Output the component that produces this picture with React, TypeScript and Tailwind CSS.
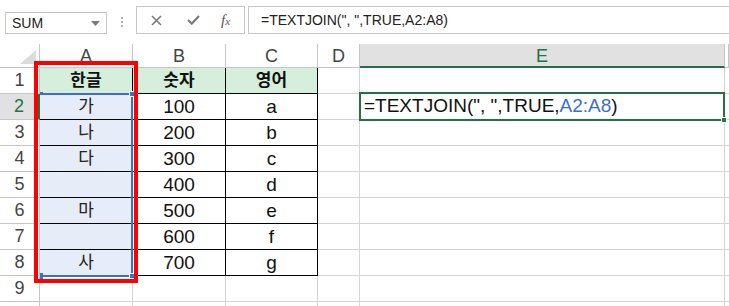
import React from 'react';

const rows: [string, string, string][] = [
  ['한글', '숫자', '영어'],
  ['가', '100', 'a'],
  ['나', '200', 'b'],
  ['다', '300', 'c'],
  ['', '400', 'd'],
  ['마', '500', 'e'],
  ['', '600', 'f'],
  ['사', '700', 'g'],
  ['', '', ''],
  ['', '', ''],
];

const cols = ['A', 'B', 'C', 'D', 'E', ''];

const Toolbar = () => (
  <div className="relative h-[44px] flex items-start bg-white">
    {/* Name box */}
    <div className="ml-[5px] mt-[12px] w-[102px] h-[22px] border border-[#c6c6c6] flex items-center justify-between pl-[6px] pr-[6px]">
      <span className="text-[14px] text-[#222]">SUM</span>
      <svg width="9" height="5" viewBox="0 0 9 5">
        <path d="M0 0 L9 0 L4.5 5 Z" fill="#7a7a7a" />
      </svg>
    </div>
    {/* Dots */}
    <div className="ml-[14px] mt-[17px] flex flex-col gap-[2px]">
      <div className="w-[2px] h-[2px] bg-[#b5b5b5]" />
      <div className="w-[2px] h-[2px] bg-[#b5b5b5]" />
      <div className="w-[2px] h-[2px] bg-[#b5b5b5]" />
    </div>
    {/* Function buttons */}
    <div className="ml-[13px] mt-[6px] w-[109px] h-[28px] border border-[#c6c6c6] flex items-center">
      <svg className="ml-[14px]" width="11" height="11" viewBox="0 0 11 11">
        <path d="M1 1 L10 10 M10 1 L1 10" stroke="#7a7a7a" strokeWidth="1.6" />
      </svg>
      <svg className="ml-[25px]" width="13" height="10" viewBox="0 0 13 10">
        <path d="M1 5 L4.8 8.6 L12 1" stroke="#7a7a7a" strokeWidth="2.2" fill="none" />
      </svg>
      <span className="ml-[21px] text-[15px] italic text-[#555] leading-none" style={{ fontFamily: '"Liberation Serif", serif' }}>
        f<span className="text-[11px]">x</span>
      </span>
    </div>
    {/* Formula bar */}
    <div className="ml-[3px] mt-[6px] flex-1 h-[28px] border border-r-0 border-[#c6c6c6] flex items-center pl-[12px]">
      <span className="text-[14px] text-[#222] whitespace-pre">=TEXTJOIN(", ",TRUE,A2:A8)</span>
    </div>
  </div>
);

export default function App() {
  return (
    <div className="w-[729px] h-[306px] overflow-hidden bg-white relative" style={{ fontFamily: '"Liberation Sans", "Noto Sans CJK KR", Arial, sans-serif' }}>
      <Toolbar />
      <div className="grid grid-cols-[40px_93px_93px_92px_42px_365px_1fr] grid-rows-[24px_repeat(10,26px)]">
        {/* Header row */}
        <div className="relative border-r border-b border-[#c6c6c6] bg-white">
          <svg className="absolute left-0 top-0" width="40" height="24" viewBox="0 0 40 24">
            <path d="M36 6 L36 20 L20 20 Z" fill="#dcdcdc" />
          </svg>
        </div>
        {cols.map((c, i) =>
          c === 'E' ? (
            <div key={i} className="bg-[#e1e1e1] border-r border-[#c6c6c6] border-b-2 border-b-[#217346] flex items-center justify-center text-[18px] text-[#217346] pt-[2px]">
              {c}
            </div>
          ) : (
            <div key={i} className="bg-white border-r border-b border-[#c6c6c6] flex items-center justify-center text-[18px] text-[#444] pt-[2px]">
              {c}
            </div>
          )
        )}
        {rows.map((r, ri) => (
          <React.Fragment key={ri}>
            {ri === 1 ? (
              <div className="bg-[#e1e1e1] border-r-2 border-r-[#217346] border-b border-[#c6c6c6] flex items-center justify-center text-[18px] text-[#217346]">
                {ri + 1}
              </div>
            ) : (
              <div className="bg-white border-r border-b border-[#c6c6c6] flex items-center justify-center text-[18px] text-[#444]">
                {ri < 9 ? ri + 1 : ''}
              </div>
            )}
            {ri === 0 ? (
              <>
                <div className="bg-[#d5efdc] border-r border-b border-black flex items-center justify-center text-[17px] font-bold text-[#111]">{r[0]}</div>
                <div className="bg-[#d5efdc] border-r border-b border-black flex items-center justify-center text-[17px] font-bold text-[#111]">{r[1]}</div>
                <div className="bg-[#d5efdc] border-r border-b border-black flex items-center justify-center text-[17px] font-bold text-[#111]">{r[2]}</div>
              </>
            ) : ri < 8 ? (
              <>
                <div className="bg-[#e7edf8] border-r border-b border-black flex items-center justify-center text-[17px] text-[#222]">{r[0]}</div>
                <div className="bg-white border-r border-b border-black flex items-center justify-center text-[19px] text-[#111] pt-[1px]">{r[1]}</div>
                <div className="bg-white border-r border-b border-black flex items-center justify-center text-[19px] text-[#111] pt-[1px]">{r[2]}</div>
              </>
            ) : (
              <>
                <div className="border-r border-b border-[#d4d4d4]" />
                <div className="border-r border-b border-[#d4d4d4]" />
                <div className="border-r border-b border-[#d4d4d4]" />
              </>
            )}
            <div className="border-r border-b border-[#d4d4d4]" />
            {ri === 1 ? (
              <div className="border-r border-b border-[#d4d4d4] flex items-center pl-[4px] text-[19px] text-[#111] whitespace-pre overflow-hidden">
                =TEXTJOIN(", ",TRUE,<span className="text-[#3a6fd0]">A2:A8</span>)
              </div>
            ) : (
              <div className="border-r border-b border-[#d4d4d4]" />
            )}
            <div className="border-b border-[#d4d4d4]" />
          </React.Fragment>
        ))}
      </div>

      {/* Reference highlight A2:A8 */}
      <div className="absolute left-[41px] top-[93px] w-[92px] h-[184px] border-t-2 border-r-2 border-b-2 border-[#3a70c8]" />
      <div className="absolute left-[40px] top-[92px] w-[3px] h-[3px] bg-[#3a70c8]" />
      <div className="absolute left-[129px] top-[91px] w-[6px] h-[6px] bg-[#3a70c8] border border-white" />
      <div className="absolute left-[40px] top-[273px] w-[3px] h-[6px] bg-[#3a70c8]" />
      <div className="absolute left-[129px] top-[273px] w-[6px] h-[6px] bg-[#3a70c8] border border-white" />

      {/* Red annotation box */}
      <div className="absolute left-[34px] top-[61px] w-[104px] h-[222px] border-[4px] border-[#ff0000]" />

      {/* Active cell E2 */}
      <div className="absolute left-[359px] top-[92px] w-[366px] h-[29px] border-2 border-[#217346]" />
      <div className="absolute left-[721px] top-[117px] w-[6px] h-[6px] bg-[#217346] border border-white" />
    </div>
  );
}
